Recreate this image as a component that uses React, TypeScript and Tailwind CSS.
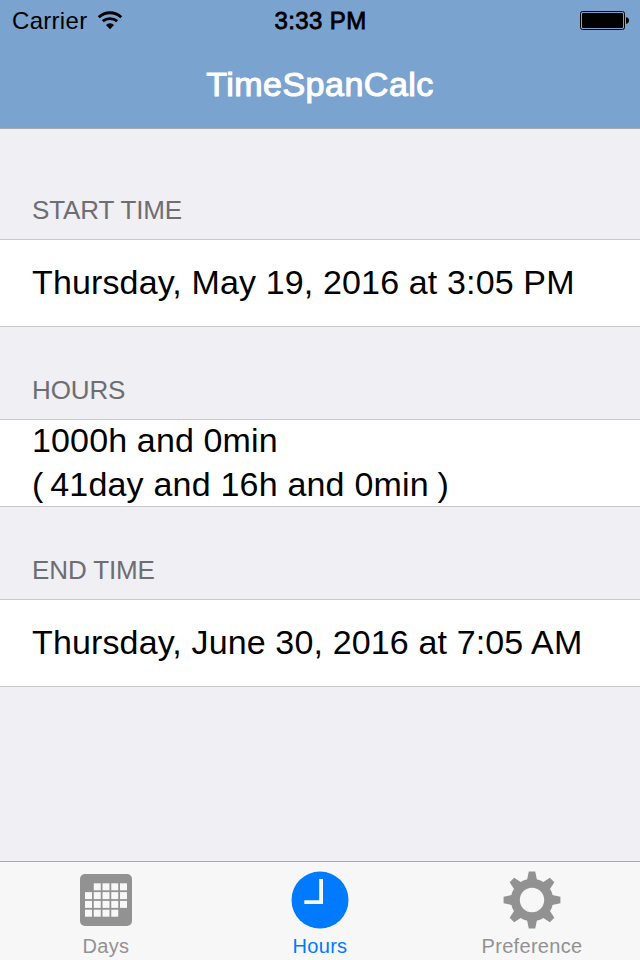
import type { ReactNode } from "react";

const calendarCells = [
  [1, 0], [2, 0], [3, 0], [4, 0],
  [0, 1], [1, 1], [2, 1], [3, 1], [4, 1],
  [0, 2], [1, 2], [2, 2], [3, 2], [4, 2],
  [0, 3], [1, 3], [2, 3], [3, 3],
];

function CalendarIcon() {
  return (
    <svg width="58" height="58" viewBox="0 0 58 58" fill="#929292">
      <rect x="3" y="3" width="52" height="52" rx="5" />
      {calendarCells.map(([c, r]) => (
        <rect key={`${c}-${r}`} x={8 + c * 8.75} y={12.3 + r * 8.8} width="7" height="7" fill="#f7f7f7" />
      ))}
    </svg>
  );
}

function ClockIcon() {
  return (
    <svg width="58" height="58" viewBox="0 0 58 58">
      <circle cx="29" cy="29" r="28.5" fill="#007aff" />
      <path d="M28.2 8H32V33H13.3V29.2H28.2Z" fill="#f7f7f7" />
    </svg>
  );
}

function GearIcon() {
  return (
    <svg width="58" height="58" viewBox="-29 -29 58 58">
      <circle r="16.7" fill="none" stroke="#929292" strokeWidth="9" />
      {[0, 45, 90, 135, 180, 225, 270, 315].map((angle) => (
        <path key={angle} d="M-5.2 -19L-3.2 -28.4H3.2L5.2 -19Z" fill="#929292" transform={`rotate(${angle})`} />
      ))}
    </svg>
  );
}

function Section({ title, children }: { title: string; children: ReactNode }) {
  return (
    <section>
      <h2 className="h-[30px] pl-8 text-[26px] leading-[30px] tracking-[-0.12px] text-[#6d6d72]">{title}</h2>
      <div className="mt-[14px] flex h-[88px] flex-col justify-center border-y border-[#c8c7cc] bg-white pb-[2px] pl-8 text-[34px] leading-[44px] tracking-[0.14px] whitespace-pre text-black">
        {children}
      </div>
    </section>
  );
}

function Tab({ label, color, icon }: { label: string; color: string; icon: ReactNode }) {
  return (
    <div className={`flex flex-col items-center pt-[9px] ${color}`}>
      {icon}
      <span className="mt-[5px] text-[20px] leading-6 tracking-[0.3px]">{label}</span>
    </div>
  );
}

export default function App() {
  return (
    <div className="flex h-[960px] w-[640px] flex-col overflow-hidden bg-[#efeff4] font-['Liberation_Sans',Arial,sans-serif]">
      <header className="h-[129px] border-b border-[#a9a9ad] bg-[#7ba3d0]">
        <div className="grid h-10 grid-cols-3 items-center pr-[11px] pl-3 text-black">
          <div className="flex items-center gap-[10px] pt-px text-[24px] leading-7 tracking-[0.3px]">
            <span>Carrier</span>
            <svg className="-mt-[2px]" width="26" height="20" viewBox="0 0 26 20" fill="none" stroke="#000">
              <path d="M1.8 7.2A16.5 16.5 0 0 1 24.2 7.2" strokeWidth="2.9" />
              <path d="M5.8 11.2A11.3 11.3 0 0 1 20.2 11.2" strokeWidth="2.9" />
              <path d="M13 19.2L9 14.9A5.8 5.8 0 0 1 17 14.9Z" fill="#000" stroke="none" />
            </svg>
          </div>
          <span className="pt-px text-center text-[24px] leading-7 tracking-[0.4px] [-webkit-text-stroke:0.8px_#000]">3:33 PM</span>
          <svg className="justify-self-end" width="49" height="20" viewBox="0 0 49 20">
            <rect x="0.5" y="1.5" width="44" height="18" rx="2" fill="none" stroke="#000" />
            <rect x="2" y="3" width="41" height="15" rx="1" />
            <path d="M46 7.3Q49 7.5 49 10.5T46 13.7Z" />
          </svg>
        </div>
        <h1 className="pt-6 text-center text-[34px] leading-[40px] font-normal tracking-[0.5px] text-white [-webkit-text-stroke:1.1px_#fff]">TimeSpanCalc</h1>
      </header>
      <main className="flex flex-1 flex-col gap-12 pt-[66px]">
        <Section title="START TIME">
          <p>Thursday, May 19, 2016 at 3:05 PM</p>
        </Section>
        <Section title="HOURS">
          <p>1000h and 0min</p>
          <p><span className="tracking-[-1.3px]">( </span><span className="tracking-[0.2px]">41day and 16h and 0min</span><span className="tracking-[-0.8px]"> )</span></p>
        </Section>
        <Section title="END TIME">
          <p>Thursday, June 30, 2016 at 7:05 AM</p>
        </Section>
      </main>
      <nav className="grid h-[99px] grid-cols-[212px_216px_208px] border-t border-[#a9a9ad] bg-[#f7f7f7]">
        <Tab label="Days" color="text-[#929292]" icon={<CalendarIcon />} />
        <Tab label="Hours" color="text-[#007aff]" icon={<ClockIcon />} />
        <Tab label="Preference" color="text-[#929292]" icon={<GearIcon />} />
      </nav>
    </div>
  );
}
